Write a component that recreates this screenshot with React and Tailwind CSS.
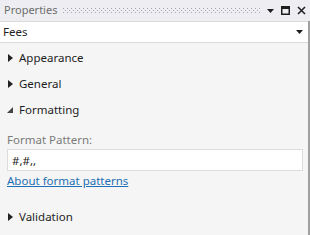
import { useState } from 'react';

const font = { fontFamily: '"Noto Sans", "Open Sans", sans-serif' };

function Caret({ open }) {
  return open ? (
    <svg width="6" height="6" viewBox="0 0 6 6" className="shrink-0">
      <path d="M6 0 L6 6 L0 6 Z" fill="#444" />
    </svg>
  ) : (
    <svg width="5" height="8" viewBox="0 0 5 8" className="shrink-0">
      <path d="M0 0 L5 4 L0 8 Z" fill="#222" />
    </svg>
  );
}

function Section({ title, open, onToggle }) {
  return (
    <button
      onClick={onToggle}
      className="flex h-[26px] items-center gap-[6px] pl-[7px] text-left text-[11.5px] text-[#1e1e1e]"
    >
      <span className="flex w-[6px] justify-center">
        <Caret open={open} />
      </span>
      {title}
    </button>
  );
}

function Grip() {
  return (
    <svg className="mx-[6px] h-[5px] flex-1" preserveAspectRatio="none">
      <defs>
        <pattern id="grip" width="4" height="4" patternUnits="userSpaceOnUse">
          <rect x="0" y="0" width="1" height="1" fill="#a8a8b4" />
          <rect x="2" y="2" width="1" height="1" fill="#a8a8b4" />
        </pattern>
      </defs>
      <rect width="100%" height="100%" fill="url(#grip)" />
    </svg>
  );
}

export default function App() {
  const [open, setOpen] = useState({ appearance: false, general: false, formatting: true, validation: false });
  const [pattern, setPattern] = useState('#,#,,');
  const toggle = (k) => setOpen({ ...open, [k]: !open[k] });

  return (
    <div className="flex h-[235px] w-[310px] flex-col overflow-hidden bg-[#f5f5f5]" style={font}>
      {/* title bar */}
      <div className="flex h-[21px] items-center bg-[#eeeef2] pl-[4px] pr-[4px]">
        <span className="text-[11px] text-[#6d6d6d]">Properties</span>
        <Grip />
        <div className="flex items-center gap-[7px]">
          <svg width="7" height="4" viewBox="0 0 7 4"><path d="M0 0 H7 L3.5 4 Z" fill="#1e1e1e" /></svg>
          <svg width="9" height="9" viewBox="0 0 9 9"><rect x="0.75" y="0.75" width="7.5" height="7.5" fill="none" stroke="#1e1e1e" strokeWidth="1.5" /><rect x="0" y="0" width="9" height="3" fill="#1e1e1e" /></svg>
          <svg width="9" height="9" viewBox="0 0 9 9"><path d="M1 1 L8 8 M8 1 L1 8" stroke="#1e1e1e" strokeWidth="1.5" /></svg>
        </div>
      </div>

      <div className="flex flex-1 flex-col border-r-2 border-[#a0a0a0]">
        {/* object selector */}
        <div className="flex h-[22px] items-center justify-between border-y border-[#dadada] bg-white pl-[3px] pr-[5px]">
          <span className="text-[11.5px] text-[#1e1e1e]">Fees</span>
          <svg width="7" height="4" viewBox="0 0 7 4"><path d="M0 0 H7 L3.5 4 Z" fill="#1e1e1e" /></svg>
        </div>

        <div className="flex flex-col pt-[2px]">
          <Section title="Appearance" open={open.appearance} onToggle={() => toggle('appearance')} />
          <Section title="General" open={open.general} onToggle={() => toggle('general')} />
          <Section title="Formatting" open={open.formatting} onToggle={() => toggle('formatting')} />
          {open.formatting && (
            <div className="flex flex-col pl-[7px] pr-[5px] pt-[9px] pb-[15px]">
              <label className="text-[11.5px] leading-[16px] text-[#7a7a7a]">Format Pattern:</label>
              <input
                value={pattern}
                onChange={(e) => setPattern(e.target.value)}
                className="mt-[1px] h-[22px] w-full border border-[#dcdcdc] bg-white px-[4px] text-[11.5px] text-[#1e1e1e] outline-none"
                style={font}
              />
              <a href="#" className="mt-[2px] w-fit text-[11.5px] leading-[16px] text-[#1e6fb3] underline">About format patterns</a>
            </div>
          )}
          <Section title="Validation" open={open.validation} onToggle={() => toggle('validation')} />
        </div>
      </div>
    </div>
  );
}
